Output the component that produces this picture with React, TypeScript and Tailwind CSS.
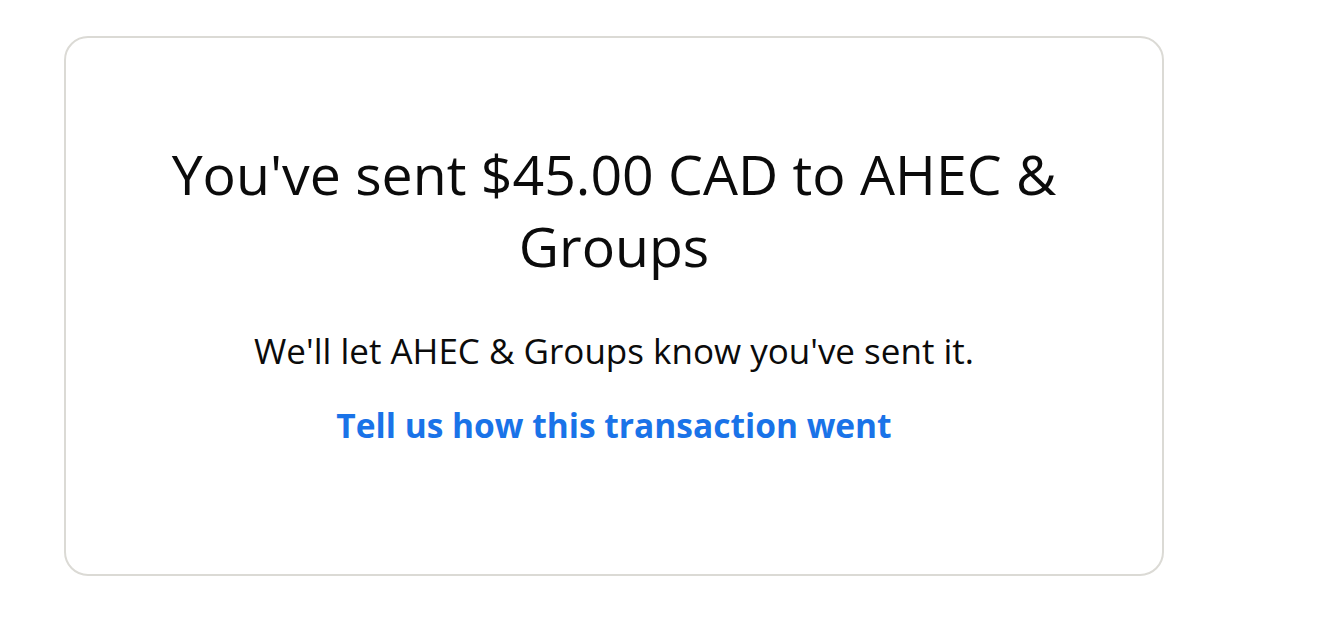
import React from 'react';

export default function App() {
  return (
    <div className="min-h-[618px] w-[1320px] bg-white pl-[64px] pt-[36px] font-['Open_Sans',sans-serif] text-[#0b0b0b]">
      <div className="flex h-[540px] w-[1100px] flex-col items-center rounded-[24px] border-2 border-[#dbdad5] px-[60px] pt-[100px]">
        <h1 className="text-center text-[55.4px] leading-[72px] font-normal">
          You've sent $45.00 CAD to AHEC &amp; Groups
        </h1>
        <p className="mt-[47px] text-center text-[35px] leading-[44px]">
          We'll let AHEC &amp; Groups know you've sent it.
        </p>
        <a href="#" className="mt-[30px] text-[33.5px] leading-[44px] font-bold text-[#1a73e8]">
          Tell us how this transaction went
        </a>
      </div>
    </div>
  );
}
